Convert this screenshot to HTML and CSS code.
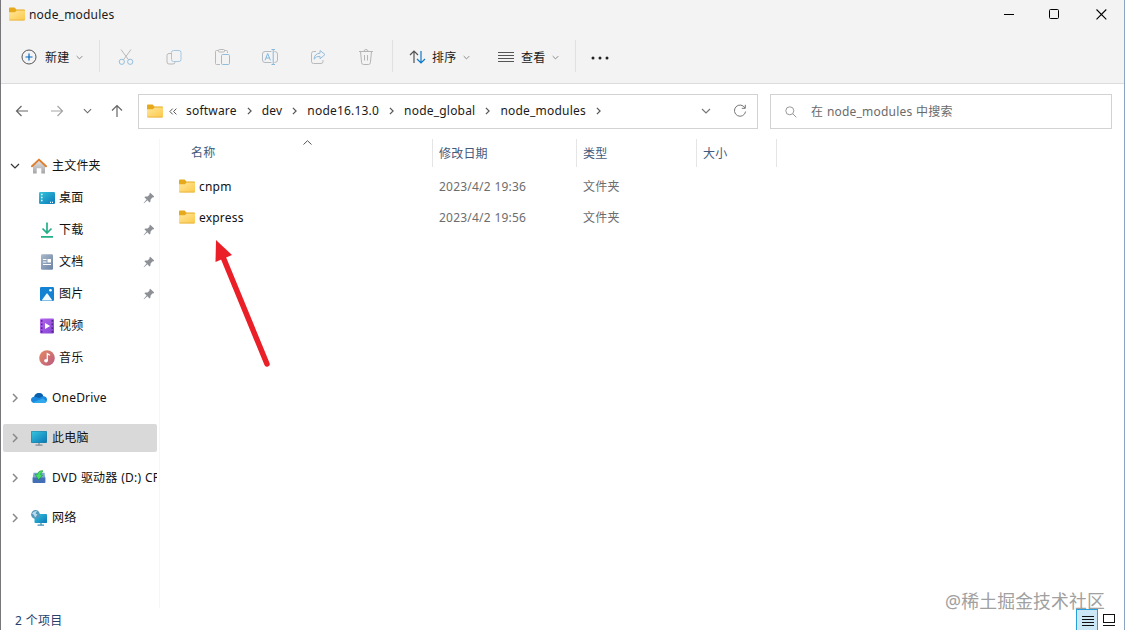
FILE: index.html
```html
<!DOCTYPE html>
<html lang="zh-CN">
<head>
    <meta charset="UTF-8">
    <meta name="viewport" content="width=device-width, initial-scale=1.0">
    <title>node_modules</title>
    <link rel="stylesheet" href="styles.css">
</head>
<body>
    <!-- Shared icons -->
    <svg class="defs" width="0" height="0">
        <defs>
            <linearGradient id="gFolder" x1="0" y1="0" x2="1" y2="1"><stop offset="0" stop-color="#ffe69b"/><stop offset="1" stop-color="#fcc94a"/></linearGradient>
            <linearGradient id="gBlue" x1="0" y1="0" x2="1" y2="1"><stop offset="0" stop-color="#35c4dc"/><stop offset="1" stop-color="#0b78b8"/></linearGradient>
            <linearGradient id="gDoc" x1="0" y1="0" x2="1" y2="1"><stop offset="0" stop-color="#a9b9ca"/><stop offset="1" stop-color="#6c83a5"/></linearGradient>
            <linearGradient id="gVideo" x1="0" y1="0" x2="1" y2="1"><stop offset="0" stop-color="#b565ee"/><stop offset="1" stop-color="#8345d2"/></linearGradient>
            <linearGradient id="gMusic" x1="0" y1="0" x2="1" y2="1"><stop offset="0" stop-color="#e78a61"/><stop offset="1" stop-color="#b85a81"/></linearGradient>
            <linearGradient id="gHome" x1="0" y1="0" x2="0" y2="1"><stop offset="0" stop-color="#e4e4e4"/><stop offset="1" stop-color="#a5a5a8"/></linearGradient>
        </defs>
        <symbol id="folder" viewBox="0 0 16 14">
            <path d="M0 1.6Q0 .6 1 .6H5.6L7.4 2.4H15Q16 2.4 16 3.4V6H0z" fill="#e6a91b"/>
            <path d="M0 5.2H5.8L7.6 3.6H16V12.4Q16 13.4 15 13.4H1Q0 13.4 0 12.4z" fill="url(#gFolder)"/>
            <path d="M.5 13H15.5" stroke="#e5b043" stroke-width=".8"/>
        </symbol>
        <symbol id="down" viewBox="0 0 10 6"><path d="M1 1L5 5L9 1" fill="none" stroke="currentColor" stroke-width="1.2"/></symbol>
        <symbol id="right" viewBox="0 0 6 10"><path d="M1 1L5 5L1 9" fill="none" stroke="currentColor" stroke-width="1.5"/></symbol>
        <symbol id="pin" viewBox="0 0 12 12">
            <path d="M7.2 .8L11.2 4.6L10.2 5.6L9.4 5.4L7.6 7.4L7.4 9.8L6.5 10.6L4.4 8.3L1 11.3L.6 10.9L3.6 7.4L1.4 5.3L2.2 4.5L4.6 4.4L6.6 2.6L6.3 1.8z" fill="#8d9196"/>
        </symbol>
    </svg>

    <div class="window">
        <div class="titlebar">
            <svg class="folder" width="16" height="14"><use href="#folder"/></svg>
            <span class="title">node_modules</span>
            <div class="win-buttons">
                <svg width="11" height="11" viewBox="0 0 11 11"><path d="M0 5.5H10" stroke="#000"/></svg>
                <svg width="11" height="11" viewBox="0 0 11 11"><rect x=".5" y=".5" width="9" height="9" rx="1" fill="none" stroke="#000"/></svg>
                <svg width="11" height="11" viewBox="0 0 11 11"><path d="M.5 .5L10.3 10.3M10.3 .5L.5 10.3" stroke="#000" stroke-width="1.1"/></svg>
            </div>
        </div>

        <div class="toolbar">
            <div class="tool new">
                <svg width="16" height="16" viewBox="0 0 16 16" fill="none"><circle cx="8" cy="8" r="7" stroke="#555"/><path d="M8 4.5V11.5M4.5 8H11.5" stroke="#0067c0" stroke-width="1.2"/></svg>
                <span>新建</span>
                <svg class="caret" width="7" height="5"><use href="#down"/></svg>
            </div>
            <div class="sep"></div>
            <div class="icons">
                <svg width="16" height="18" viewBox="0 0 16 18" fill="none"><path d="M3 1.5L10.5 11.8M13 1.5L5.5 11.8" stroke="#b9b9b9"/><circle cx="3.8" cy="13.8" r="2.6" stroke="#92bedd"/><circle cx="12.2" cy="13.8" r="2.6" stroke="#92bedd"/></svg>
                <svg width="16" height="18" viewBox="0 0 16 18" fill="none"><path d="M5 5.5H3Q1 5.5 1 7.5V14Q1 16 3 16H7Q9 16 9 14" stroke="#b9b9b9"/><rect x="5.5" y="2.5" width="9.5" height="11" rx="2" stroke="#a3c8e2"/></svg>
                <svg width="16" height="18" viewBox="0 0 16 18" fill="none"><path d="M6 16.5H2.5Q1.5 16.5 1.5 15.5V3.5Q1.5 2.5 2.5 2.5H4.5M10.5 2.5H12.5Q13.5 2.5 13.5 3.5V5" stroke="#b9b9b9"/><rect x="4.5" y="1.5" width="6" height="2.5" rx="1" stroke="#b9b9b9"/><rect x="7.5" y="6.5" width="8" height="10" rx="1.2" stroke="#92bedd"/></svg>
                <svg width="18" height="18" viewBox="0 0 18 18" fill="none"><path d="M10.5 3.5H4Q1.5 3.5 1.5 6V12Q1.5 14.5 4 14.5H10.5M13.5 3.5Q16.5 3.5 16.5 6V12Q16.5 14.5 13.5 14.5" stroke="#b3bac0"/><path d="M10.5 1.5H14M10.5 16.5H14M12.2 1.5V16.5M4 12.3L6.7 5.5L9.4 12.3M5 10H8.5" stroke="#85b9de"/></svg>
                <svg width="16" height="18" viewBox="0 0 16 18" fill="none"><path d="M6 3.5H3.5Q1.5 3.5 1.5 5.5V13.5Q1.5 15.5 3.5 15.5H11Q13 15.5 13 13.5V12" stroke="#b9b9b9"/><path d="M10 2.5L15 6.5L10 10.8V8.3Q6 8 4 11.2Q4.5 5.5 10 5.2z" stroke="#92bedd" stroke-linejoin="round"/></svg>
                <svg width="16" height="18" viewBox="0 0 16 18" fill="none"><path d="M1 3.5H15M6 3.5Q6 1.5 8 1.5Q10 1.5 10 3.5M2.5 3.5L3.6 14.7Q3.8 16.5 5.5 16.5H10.5Q12.2 16.5 12.4 14.7L13.5 3.5M6.5 7V12.5M9.5 7V12.5" stroke="#b5b5b5"/></svg>
            </div>
            <div class="sep"></div>
            <div class="tool sort">
                <svg width="17" height="16" viewBox="0 0 17 16" fill="none" stroke-width="1.2"><path d="M5 14V2M1 6L5 2L9 6" stroke="#555"/><path d="M12 2V14M8 10L12 14L16 10" stroke="#0b78c8"/></svg>
                <span>排序</span>
                <svg class="caret" width="7" height="5"><use href="#down"/></svg>
            </div>
            <div class="tool view">
                <svg width="16" height="12" viewBox="0 0 16 12"><path d="M0 1.5H16M0 4.5H16M0 7.5H16M0 10.5H16" stroke="#555"/></svg>
                <span>查看</span>
                <svg class="caret" width="7" height="5"><use href="#down"/></svg>
            </div>
            <div class="sep"></div>
            <svg class="more" width="18" height="4" viewBox="0 0 18 4" fill="#222"><circle cx="2" cy="2" r="1.5"/><circle cx="9" cy="2" r="1.5"/><circle cx="16" cy="2" r="1.5"/></svg>
        </div>

        <div class="navbar">
            <div class="nav-buttons">
                <svg width="14" height="12" viewBox="0 0 14 12" fill="none" stroke="#666" stroke-width="1.2"><path d="M13 6H1.5M6.5 1L1.5 6L6.5 11"/></svg>
                <svg width="14" height="12" viewBox="0 0 14 12" fill="none" stroke="#a5a5a5" stroke-width="1.2"><path d="M1 6H12.5M7.5 1L12.5 6L7.5 11"/></svg>
                <svg class="recent" width="9" height="6"><use href="#down"/></svg>
                <svg width="12" height="14" viewBox="0 0 12 14" fill="none" stroke="#666" stroke-width="1.2"><path d="M6 13V1.5M1 6.5L6 1.5L11 6.5"/></svg>
            </div>
            <div class="address">
                <svg class="folder" width="16" height="14"><use href="#folder"/></svg>
                <svg class="overflow" width="8" height="7" viewBox="0 0 8 7"><path d="M3.7 .6L.9 3.5L3.7 6.4M7.4 .6L4.6 3.5L7.4 6.4" fill="none" stroke="#555"/></svg>
                <div class="crumbs">
                    <span>software</span><svg width="5" height="8"><use href="#right"/></svg>
                    <span>dev</span><svg width="5" height="8"><use href="#right"/></svg>
                    <span>node16.13.0</span><svg width="5" height="8"><use href="#right"/></svg>
                    <span>node_global</span><svg width="5" height="8"><use href="#right"/></svg>
                    <span>node_modules</span><svg width="5" height="8"><use href="#right"/></svg>
                </div>
                <svg class="history" width="10" height="6"><use href="#down"/></svg>
                <svg width="14" height="14" viewBox="0 0 14 14" fill="none" stroke="#777"><path d="M12 4A5.6 5.6 0 1 0 12.6 7.5M12.3 .8V4.3H8.800"/></svg>
            </div>
            <div class="search">
                <svg width="12" height="12" viewBox="0 0 12 12" fill="none" stroke="#999"><circle cx="4.8" cy="4.8" r="4"/><path d="M7.7 7.7L11.3 11.3"/></svg>
                <span>在 node_modules 中搜索</span>
            </div>
        </div>

        <div class="content">
            <div class="sidebar">
                <div class="item">
                    <svg class="arrow open" width="10" height="6"><use href="#down"/></svg>
                    <svg class="icon" viewBox="0 0 16 16"><path d="M2 7.5L8 2L14 7.5V15Q14 15.5 13.5 15.5H10.3V10.3H5.7V15.5H2.5Q2 15.5 2 15z" fill="url(#gHome)"/><path d="M1 8.3L8 1.6L15 8.3" fill="none" stroke="#df7e2c" stroke-width="1.9" stroke-linecap="round" stroke-linejoin="round"/></svg>
                    <span>主文件夹</span>
                </div>
                <div class="item child">
                    <svg class="icon" viewBox="0 0 16 16"><rect y="2" width="16" height="12" rx="1.3" fill="url(#gBlue)"/><path d="M2 4.5H3.5M2 7.5H3.5M2 10.5H3.5M11 12.3H12M13 12.3H14" stroke="#fff" stroke-width="1.3"/></svg>
                    <span>桌面</span>
                    <svg class="pin" width="12" height="12"><use href="#pin"/></svg>
                </div>
                <div class="item child">
                    <svg class="icon" viewBox="0 0 16 16" fill="none" stroke="#25ae88" stroke-width="1.7"><path d="M8 .5V11M3.5 6.5L8 11L12.5 6.5M2 14.8H14"/></svg>
                    <span>下载</span>
                    <svg class="pin" width="12" height="12"><use href="#pin"/></svg>
                </div>
                <div class="item child">
                    <svg class="icon" viewBox="0 0 16 16"><rect x="2" y=".3" width="12" height="15.4" rx="1.2" fill="url(#gDoc)"/><path d="M4 5.5H7.5M4 8H7.5M4 10.5H12" stroke="#fff"/><rect x="8.5" y="5" width="3.5" height="3.5" fill="#fff"/></svg>
                    <span>文档</span>
                    <svg class="pin" width="12" height="12"><use href="#pin"/></svg>
                </div>
                <div class="item child">
                    <svg class="icon" viewBox="0 0 16 16"><rect x="1" y="1" width="14" height="14" rx="1.3" fill="#1482d3"/><path d="M2.6 14.5L7.6 7.6Q8 7.2 8.4 7.6L13.400 14.5z" fill="#f2faff"/><circle cx="11.5" cy="4.3" r="1.3" fill="#fff"/></svg>
                    <span>图片</span>
                    <svg class="pin" width="12" height="12"><use href="#pin"/></svg>
                </div>
                <div class="item child">
                    <svg class="icon" viewBox="0 0 16 16"><rect x="1" y=".5" width="14" height="15" rx="1.3" fill="url(#gVideo)"/><path d="M2.7 2V15M13.3 2V15" stroke="#4c2789" stroke-width="1.5" stroke-dasharray="1.7 1.9"/><path d="M6 5L11.2 8L6 11z" fill="#fff"/></svg>
                    <span>视频</span>
                </div>
                <div class="item child">
                    <svg class="icon" viewBox="0 0 16 16"><circle cx="8" cy="8" r="7.8" fill="url(#gMusic)"/><ellipse cx="7" cy="10.8" rx="1.9" ry="1.7" fill="#fff"/><path d="M8.3 11V3.7L11 5.2" fill="none" stroke="#fff" stroke-width="1.3"/></svg>
                    <span>音乐</span>
                </div>
                <div class="item root">
                    <svg class="arrow" width="6" height="10"><use href="#right"/></svg>
                    <svg class="icon" viewBox="0 0 16 16"><path d="M3.5 13Q0 12.8 0 9.8Q.2 7 3.2 6.7Q4.5 3 8 3Q11.2 3 12.3 6.3Q16 6.5 16 9.8Q15.8 13 12.5 13z" fill="#1a86dc"/><path d="M3.2 6.7Q4.5 3 8 3Q11.2 3 12.3 6.3Q10 6.3 8.5 8z" fill="#0b5ea9"/><path d="M2 12.5L12 8.3L15.5 11.5Q14.5 13 12.5 13H3.5z" fill="#30a9ec"/></svg>
                    <span>OneDrive</span>
                </div>
                <div class="item root selected">
                    <svg class="arrow" width="6" height="10"><use href="#right"/></svg>
                    <svg class="icon" viewBox="0 0 16 16"><rect y="1" width="16" height="12" rx="1" fill="#287fa1"/><rect x=".6" y="1.6" width="14.8" height="10.8" rx=".6" fill="url(#gBlue)"/><path d="M8 13V15M4.5 15.2H11.5" stroke="#7f8d98" stroke-width="1.3"/></svg>
                    <span>此电脑</span>
                </div>
                <div class="item root">
                    <svg class="arrow" width="6" height="10"><use href="#right"/></svg>
                    <svg class="icon" viewBox="0 0 16 16"><path d="M2.500 2.800H13.500L14.300 8V12.500H1.700V8z" fill="#7ca7d2"/><path d="M1.700 7.500H14.300V12.200Q14.300 13 13.500 13H2.500Q1.700 13 1.700 12.200z" fill="#446fb7"/><path d="M11.5 .5Q7.2 .5 6.4 4.400L4.200 4.200L7.5 9.800L11.600 5.200L9.5 4.8Q9.800 2.600 11.5 2z" fill="#45e062" stroke="#158833" stroke-width=".5"/></svg>
                    <span>DVD 驱动器 (D:) CP</span>
                </div>
                <div class="item root">
                    <svg class="arrow" width="6" height="10"><use href="#right"/></svg>
                    <svg class="icon" viewBox="0 0 16 16"><rect x="3.5" y="4" width="12.5" height="9" rx=".8" fill="url(#gBlue)"/><path d="M10 13V15M6.5 15.2H13" stroke="#3f91b4" stroke-width="1.2"/><circle cx="4.5" cy="4.5" r="4.4" fill="#5498bd"/><path d="M1 3.5Q3 .5 6 1L4.5 3.5L6.5 4.5L4 7.5L3 5z" fill="#bcdceb"/></svg>
                    <span>网络</span>
                </div>
            </div>

            <div class="main">
                <div class="list-row list-head">
                    <div class="name">名称<svg class="sorted" width="9" height="5" viewBox="0 0 9 5"><path d="M.5 4.5L4.5 .7L8.5 4.5" fill="none" stroke="#555"/></svg></div>
                    <div>修改日期</div>
                    <div>类型</div>
                    <div>大小</div>
                </div>
                <div class="list-row">
                    <div class="name"><svg class="folder" width="16" height="14"><use href="#folder"/></svg><span>cnpm</span></div>
                    <div>2023/4/2 19:36</div>
                    <div>文件夹</div>
                </div>
                <div class="list-row">
                    <div class="name"><svg class="folder" width="16" height="14"><use href="#folder"/></svg><span>express</span></div>
                    <div>2023/4/2 19:56</div>
                    <div>文件夹</div>
                </div>
            </div>
        </div>

        <div class="statusbar">
            <span>2 个项目</span>
            <div class="view-modes">
                <div class="mode active"><svg width="12" height="12" viewBox="0 0 12 12"><path d="M0 1.5H12M0 4.5H12M0 7.5H12M0 10.5H12" stroke="#111"/></svg></div>
                <div class="mode"><svg width="12" height="12" viewBox="0 0 12 12"><rect x=".5" y=".5" width="11" height="8" fill="none" stroke="#111"/><path d="M0 11.5H12" stroke="#111"/></svg></div>
            </div>
        </div>
    </div>

    <!-- Annotation arrow -->
    <svg class="annotation" width="60" height="132" viewBox="0 0 60 132"><path d="M13 17L57 124" stroke="#ea1f27" stroke-width="5.5" stroke-linecap="round"/><path d="M6 0L22 15L5.5 22z" fill="#ea1f27"/></svg>
    <div class="watermark">@稀土掘金技术社区</div>
</body>
</html>
```
FILE: styles.css
```css
* {
    box-sizing: border-box;
}

body {
    margin: 0;
    height: 630px;
    overflow: hidden;
    background-color: #fff;
    color: #1a1a1a;
    font-family: "Noto Sans", "Noto Sans CJK SC", sans-serif;
    font-size: 12px;
    line-height: 16px;
    letter-spacing: 0.2px;
    word-spacing: 0.4px;
}

svg {
    display: block;
    flex: none;
}

.defs {
    position: absolute;
}

.window {
    display: flex;
    flex-direction: column;
    height: 630px;
    border-left: 1px solid #77777a;
    border-right: 1px solid #8ba4c4;
}

.titlebar {
    display: flex;
    align-items: center;
    height: 30px;
    padding: 0 17px 2px 8px;
    background-color: #f3f3f3;
}

.title {
    margin-left: 4px;
    padding-top: 2px;
}

.win-buttons {
    display: flex;
    gap: 35px;
    margin-left: auto;
}

.win-buttons svg:nth-child(2) {
    margin: 0 1px 0 -1px;
}

.toolbar {
    display: flex;
    align-items: center;
    height: 54px;
    padding-top: 1px;
    background-color: #f3f3f3;
    border-bottom: 1px solid #dcdcdc;
}

.tool {
    display: flex;
    align-items: center;
}

.tool span {
    width: 24px;
    padding-top: 2px;
    white-space: nowrap;
}

.tool .caret {
    margin-left: 7px;
    color: #777;
}

.new {
    width: 98px;
    padding-left: 20px;
}

.new span {
    margin-left: 8px;
}

.sep {
    width: 1px;
    height: 32px;
    margin-bottom: 2px;
    background-color: #e1e1e1;
}

.icons {
    display: grid;
    grid-template-columns: repeat(6, 48px);
    justify-items: center;
    width: 292px;
    padding-left: 2px;
}

.sort {
    width: 105px;
    padding-left: 16px;
}

.sort span {
    margin-left: 6px;
}

.view {
    width: 77px;
}

.view span {
    margin-left: 7px;
}

.more {
    margin: 2px 0 0 15px;
}

.navbar {
    display: flex;
    align-items: center;
    height: 55px;
    padding-right: 12px;
}

.nav-buttons {
    display: flex;
    align-items: center;
    width: 137px;
    padding: 0 0 1px 14px;
    gap: 21px;
}

.recent {
    margin: 0 -2px 0 -2px;
    color: #666;
}

.address,
.search {
    display: flex;
    align-items: center;
    height: 35px;
    border: 1px solid #d2d2d2;
}

.address {
    width: 620px;
    padding: 0 10px 1px 8px;
}

.overflow {
    margin: 0 9px 0 6px;
}

.crumbs {
    display: flex;
    align-items: center;
    gap: 10px;
    color: #555;
}

.crumbs span {
    color: #1a1a1a;
}

.history {
    margin: 0 22px 0 auto;
    color: #777;
}

.search {
    flex: 1;
    margin-left: 12px;
    padding-left: 14px;
    color: #6a6a6a;
}

.search span {
    margin-left: 14px;
}

.content {
    display: flex;
    height: 469px;
}

.sidebar {
    width: 159px;
    padding: 13px 2px 0 2px;
    border-right: 1px solid #f6f6f6;
}

.item {
    display: flex;
    align-items: center;
    height: 28px;
    margin-bottom: 4px;
    padding-left: 9px;
    overflow: hidden;
    white-space: nowrap;
    color: #111;
}

.arrow {
    width: 6px;
    margin-right: 13px;
    color: #888;
}

.arrow.open {
    width: 10px;
    margin: 0 11px 0 -2px;
    color: #333;
}

.icon {
    width: 16px;
    height: 16px;
    margin-right: 5px;
}

.child {
    padding-left: 36px;
}

.child .icon {
    margin-right: 4px;
}

.pin {
    margin: 0 2px 0 auto;
}

.root {
    margin: 12px 0 0;
}

.selected {
    background-color: #d9d9d9;
    border-radius: 2px;
}

.main {
    flex: 1;
}

.list-row {
    display: grid;
    grid-template-columns: 273px 144px 120px 80px;
    align-items: center;
    height: 31px;
    color: #6d6d6d;
}

.list-row > div {
    padding-left: 6px;
}

.list-row .name {
    display: flex;
    align-items: center;
    padding-left: 19px;
    color: #111;
}

.name .folder {
    margin-bottom: 2px;
}

.name span {
    margin-left: 4px;
}

.list-head {
    height: 28px;
    margin-bottom: 4px;
    color: #44597b;
}

.list-head > div {
    height: 28px;
    line-height: 30px;
    border-right: 1px solid #e5e5e5;
}

.list-head .name {
    padding-left: 31px;
    color: #44597b;
}

.sorted {
    align-self: flex-start;
    margin: 1px 0 0 88px;
}

.statusbar {
    display: flex;
    align-items: center;
    height: 22px;
    padding: 0 4px 0 14px;
    color: #27406b;
}

.statusbar > span {
    padding-top: 3px;
}

.view-modes {
    display: flex;
    align-self: stretch;
    margin-left: auto;
}

.mode {
    display: flex;
    justify-content: center;
    width: 22px;
    padding-top: 6px;
}

.mode.active {
    margin-top: 1px;
    padding: 5px 0 0 1px;
    background-color: #cce8f6;
    border: 1px solid #26a0da;
    border-bottom: none;
}

.annotation {
    position: absolute;
    left: 210px;
    top: 240px;
}

.watermark {
    position: absolute;
    left: 945px;
    top: 588px;
    color: #a0a0a0;
    font-size: 17.8px;
    line-height: 26px;
    white-space: nowrap;
}
```
